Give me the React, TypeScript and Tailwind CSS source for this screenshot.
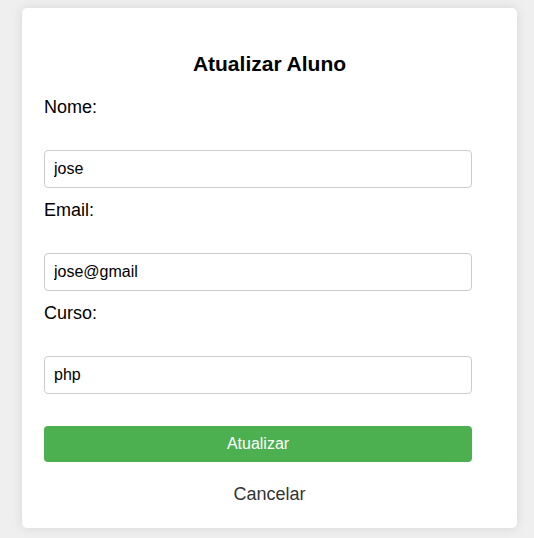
const fields = [
  { id: "nome", label: "Nome:", value: "jose", type: "text" },
  { id: "email", label: "Email:", value: "jose@gmail", type: "text" },
  { id: "curso", label: "Curso:", value: "php", type: "text" },
];

export default function App() {
  return (
    <div className="min-h-screen bg-[#efefef] pt-2 pr-[17px] pb-[10px] pl-[22px] font-['Liberation_Sans',Arial,sans-serif] text-black">
      <main className="rounded-[5px] bg-white px-[22px] pt-10 pb-[22px] shadow-[0_0_12px_rgba(0,0,0,0.1)]">
        <h1 className="text-center text-[21px] leading-8 font-bold">Atualizar Aluno</h1>
        <form className="mt-[15px] pr-[23px]">
          {fields.map((field) => (
            <div key={field.id} className="mb-[10px]">
              <label htmlFor={field.id} className="block text-lg leading-6">
                {field.label}
              </label>
              <input
                id={field.id}
                type={field.type}
                defaultValue={field.value}
                className="mt-[31px] block h-[38px] w-full rounded border border-[#cccccc] bg-white px-[9px] text-base"
              />
            </div>
          ))}
          <button type="submit" className="mt-8 block h-9 w-full rounded bg-[#4caf50] text-base text-white">
            Atualizar
          </button>
        </form>
        <a href="#" className="mt-5 block text-center text-lg leading-6 text-[#333333]">
          Cancelar
        </a>
      </main>
    </div>
  );
}
